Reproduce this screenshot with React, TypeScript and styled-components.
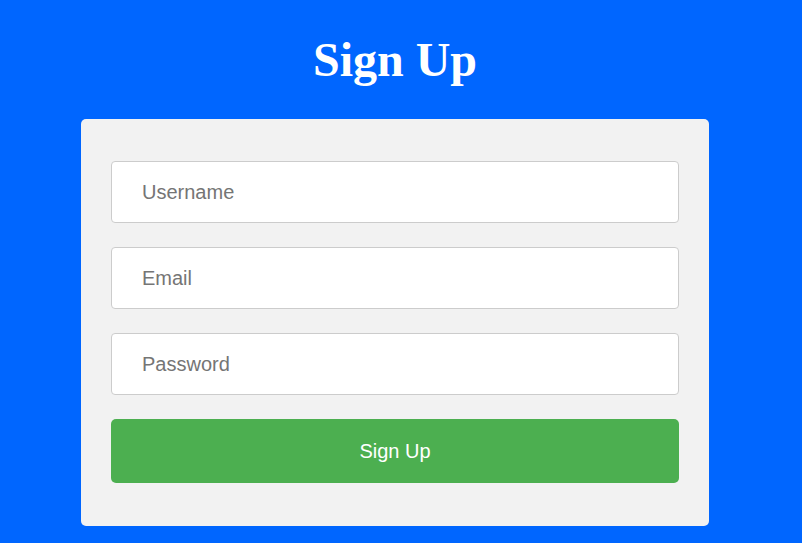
import React from "react";
import styled, { createGlobalStyle } from "styled-components";

const Global = createGlobalStyle`
  html, body { margin: 0; padding: 0; background: #0066ff; }
  body { font-family: "Liberation Sans", Arial, sans-serif; }
`;

const Page = styled.div`
  min-height: 543px;
  box-sizing: border-box;
  background: #0066ff;
  display: flex;
  flex-direction: column;
  align-items: center;
  padding-right: 12px;
`;

const Title = styled.h1`
  font-family: "Liberation Serif", "Times New Roman", serif;
  font-weight: bold;
  font-size: 48px;
  color: #ffffff;
  margin: 32px 0;
  line-height: 55px;
`;

const Card = styled.form`
  width: 628px;
  box-sizing: border-box;
  background: #f2f2f2;
  border-radius: 5px;
  padding: 42px 30px 43px;
  display: flex;
  flex-direction: column;
  gap: 24px;
`;

const Input = styled.input`
  height: 62px;
  box-sizing: border-box;
  border: 1px solid #cccccc;
  border-radius: 4px;
  background: #ffffff;
  padding: 0 30px;
  font-family: "Liberation Sans", Arial, sans-serif;
  font-size: 20px;
  color: #333;
  outline: none;
  &::placeholder { color: #757575; }
`;

const Button = styled.button`
  height: 64px;
  border: none;
  border-radius: 5px;
  background: #4caf50;
  color: #ffffff;
  font-family: "Liberation Sans", Arial, sans-serif;
  font-size: 20px;
  cursor: pointer;
`;

export default function App() {
  return (
    <>
      <Global />
      <Page>
        <Title>Sign Up</Title>
        <Card onSubmit={(e) => e.preventDefault()}>
          <Input type="text" placeholder="Username" />
          <Input type="email" placeholder="Email" />
          <Input type="password" placeholder="Password" />
          <Button type="submit">Sign Up</Button>
        </Card>
      </Page>
    </>
  );
}
